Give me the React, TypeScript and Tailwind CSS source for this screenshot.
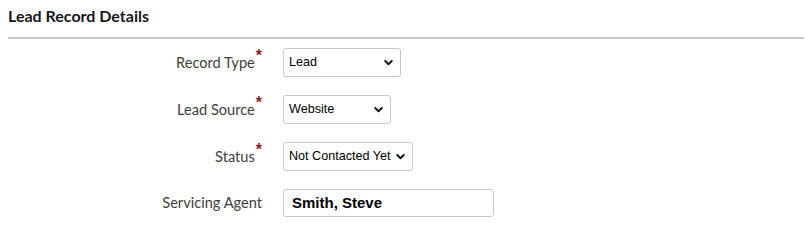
interface SelectFieldProps {
  value: string;
  width: string;
}

function Chevron() {
  return (
    <svg viewBox="0 0 10 7" className="absolute right-[7px] top-[11px] h-[6px] w-[9px]" fill="none">
      <path d="M1.2 1.2 L5 5 L8.8 1.2" stroke="#111" strokeWidth="2.2" strokeLinecap="round" strokeLinejoin="round" />
    </svg>
  );
}

function SelectField({ value, width }: SelectFieldProps) {
  return (
    <div
      className={`relative flex h-[29px] items-center rounded-[3px] border border-[#c9c9c9] bg-white pl-[5px] ${width}`}
    >
      <span className="font-['Liberation_Sans',Arial,sans-serif] text-[12.6px] text-black">{value}</span>
      <Chevron />
    </div>
  );
}

function FieldLabel({ label, required }: { label: string; required?: boolean }) {
  return (
    <div className="flex w-[254px] justify-end text-[14.6px] text-[#3e3e3c]">
      <span>{label}</span>
      {required && (
        <span className="-mt-[4px] ml-[1px] font-['Liberation_Sans',Arial,sans-serif] text-[16px] font-bold leading-[16px] text-[#8a1c1c]">
          *
        </span>
      )}
    </div>
  );
}

export default function App() {
  const rows = [
    { label: "Record Type", value: "Lead", width: "w-[118px]" },
    { label: "Lead Source", value: "Website", width: "w-[108px]" },
    { label: "Status", value: "Not Contacted Yet", width: "w-[130px]" },
  ];

  return (
    <div className="h-[241px] w-[808px] bg-white pl-[8px] pr-[4px] font-['Lato','Noto_Sans',sans-serif]">
      <h2 className="pt-[5px] text-[16px] font-bold leading-[21px] text-[#16161a]">Lead Record Details</h2>
      <div className="mt-[11px] h-[2px] bg-[#c8cbce]" />
      <div className="mt-[9px] flex flex-col gap-[18px]">
        {rows.map((row) => (
          <div key={row.label} className="flex items-center gap-[21px]">
            <FieldLabel label={row.label} required />
            <SelectField value={row.value} width={row.width} />
          </div>
        ))}
        <div className="flex items-center gap-[21px]">
          <FieldLabel label="Servicing Agent" />
          <div className="flex h-[28px] w-[211px] items-center rounded-[3px] border border-[#c9c9c9] bg-white pl-[8px]">
            <span className="font-['Liberation_Sans',Arial,sans-serif] text-[15px] font-bold text-black">Smith, Steve</span>
          </div>
        </div>
      </div>
    </div>
  );
}
